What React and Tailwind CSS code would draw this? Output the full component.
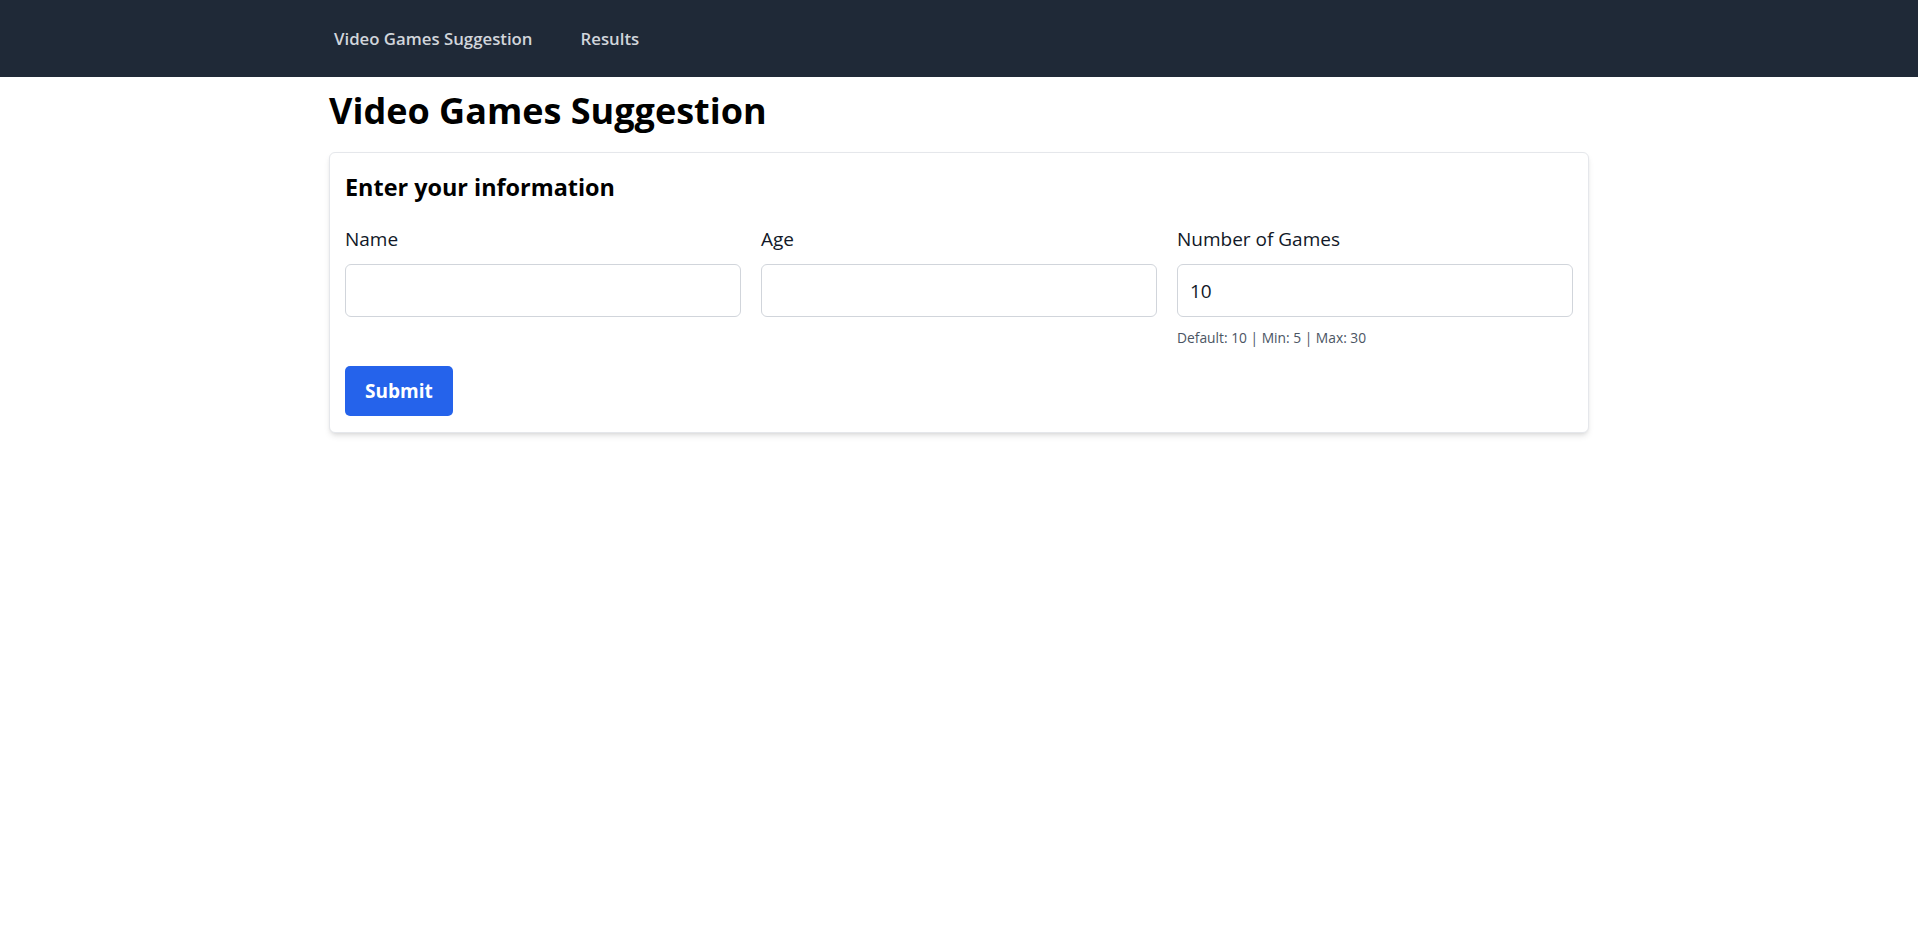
import React, { useState } from 'react';

const font = { fontFamily: '"Open Sans", "Noto Sans", sans-serif' };

const Field = ({ label, value, onChange, hint }) => (
  <div className="flex flex-col">
    <label className="text-[19px] leading-[26px] text-[#111827] mb-[12px]">{label}</label>
    <input
      value={value}
      onChange={(e) => onChange(e.target.value)}
      className="h-[53px] w-full px-[12px] text-[19px] text-[#111827] bg-white border border-[#d1d5db] rounded-[6px] outline-none"
    />
    {hint && <p className="mt-[11px] text-[13.8px] leading-[20px] text-[#4b5563]">{hint}</p>}
  </div>
);

export default function App() {
  const [name, setName] = useState('');
  const [age, setAge] = useState('');
  const [count, setCount] = useState('10');

  return (
    <div className="min-h-screen bg-white" style={font}>
      {/* Nav */}
      <nav className="h-[77px] bg-[#1f2937]">
        <div className="mx-auto w-[1260px] h-full flex items-center gap-[48px] px-[5px]">
          <a className="text-[16.8px] font-semibold text-[#d1d5db]">Video Games Suggestion</a>
          <a className="text-[16.8px] font-semibold text-[#d1d5db]">Results</a>
        </div>
      </nav>

      <main className="mx-auto w-[1260px]">
        <h1 className="mt-[12px] mb-[19px] text-[36px] leading-[44px] font-bold text-black">Video Games Suggestion</h1>

        <div className="bg-white border border-[#e5e7eb] rounded-[6px] shadow-md px-[15px] pt-[17px] pb-[16px]">
          <h2 className="text-[23.4px] leading-[34px] font-bold text-black mb-[22px]">Enter your information</h2>

          <div className="grid grid-cols-3 gap-[20px]">
            <Field label="Name" value={name} onChange={setName} />
            <Field label="Age" value={age} onChange={setAge} />
            <Field label="Number of Games" value={count} onChange={setCount} hint="Default: 10 | Min: 5 | Max: 30" />
          </div>

          <button className="mt-[18px] h-[50px] px-[20px] rounded-[5px] bg-[#2563eb] text-white text-[19px] font-bold">
            Submit
          </button>
        </div>
      </main>
    </div>
  );
}
